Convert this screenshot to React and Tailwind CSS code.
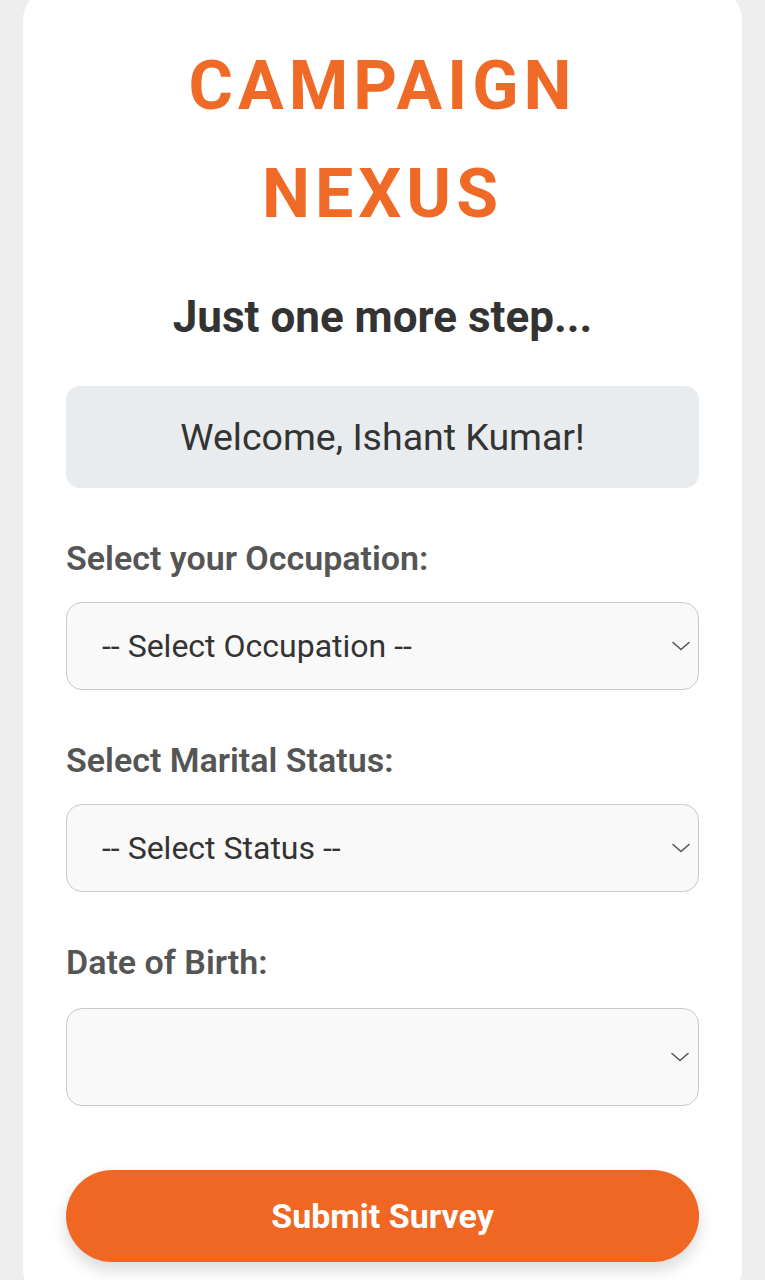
import React from "react";

function Chevron() {
  return (
    <svg
      className="pointer-events-none absolute right-[8px] top-1/2 -translate-y-1/2"
      width="20"
      height="12"
      viewBox="0 0 20 12"
      fill="none"
    >
      <path d="M2 2.5 L10 9.5 L18 2.5" stroke="#555" strokeWidth="1.6" strokeLinecap="round" strokeLinejoin="round" />
    </svg>
  );
}

function SelectField({ label, placeholder, height = "h-[88px]" }) {
  return (
    <div className="mb-[50px]">
      <label className="block text-[34px] leading-[40px] font-semibold text-[#555] mb-6">{label}</label>
      <div className="relative">
        <select
          defaultValue=""
          className={`appearance-none w-full ${height} rounded-[16px] border border-[#c9c9c9] bg-[#f9f9f9] pl-[35px] pr-12 text-[32px] text-[#333] outline-none`}
          style={{ fontFamily: "Roboto, 'Noto Sans', sans-serif" }}
        >
          <option value="">{placeholder}</option>
        </select>
        <Chevron />
      </div>
    </div>
  );
}

export default function App() {
  return (
    <div
      className="min-h-[1280px] bg-[#eeeeee] px-[23px] overflow-hidden"
      style={{ fontFamily: "Roboto, 'Noto Sans', 'Liberation Sans', sans-serif" }}
    >
      <div className="-mt-[12px] min-h-[1300px] bg-white rounded-[32px] px-[43px] pt-[44px] pb-10">
        <h1 className="text-center text-[68px] leading-[108px] font-bold tracking-[5px] text-[#ef6a26]">
          CAMPAIGN
          <br />
          NEXUS
        </h1>
        <h2 className="mt-[43px] text-center text-[44px] leading-[53px] font-bold text-[#333]">
          Just one more step...
        </h2>
        <div className="mt-[42px] h-[102px] rounded-[14px] bg-[#e9ecef] flex items-center justify-center">
          <span className="text-[37.5px] text-[#333]">Welcome, Ishant Kumar!</span>
        </div>
        <div className="mt-[50px]">
          <SelectField label="Select your Occupation:" placeholder="-- Select Occupation --" />
          <SelectField label="Select Marital Status:" placeholder="-- Select Status --" />
          <div className="mb-[64px]">
            <label className="block text-[34px] leading-[40px] font-semibold text-[#555] mb-[26px]">Date of Birth:</label>
            <div className="relative h-[98px] rounded-[16px] border border-[#c9c9c9] bg-[#f9f9f9]">
              <Chevron />
            </div>
          </div>
          <button className="w-full h-[92px] rounded-full bg-[#f06623] text-white text-[34px] font-bold shadow-[0_8px_16px_rgba(0,0,0,0.15)]">
            Submit Survey
          </button>
        </div>
      </div>
    </div>
  );
}
